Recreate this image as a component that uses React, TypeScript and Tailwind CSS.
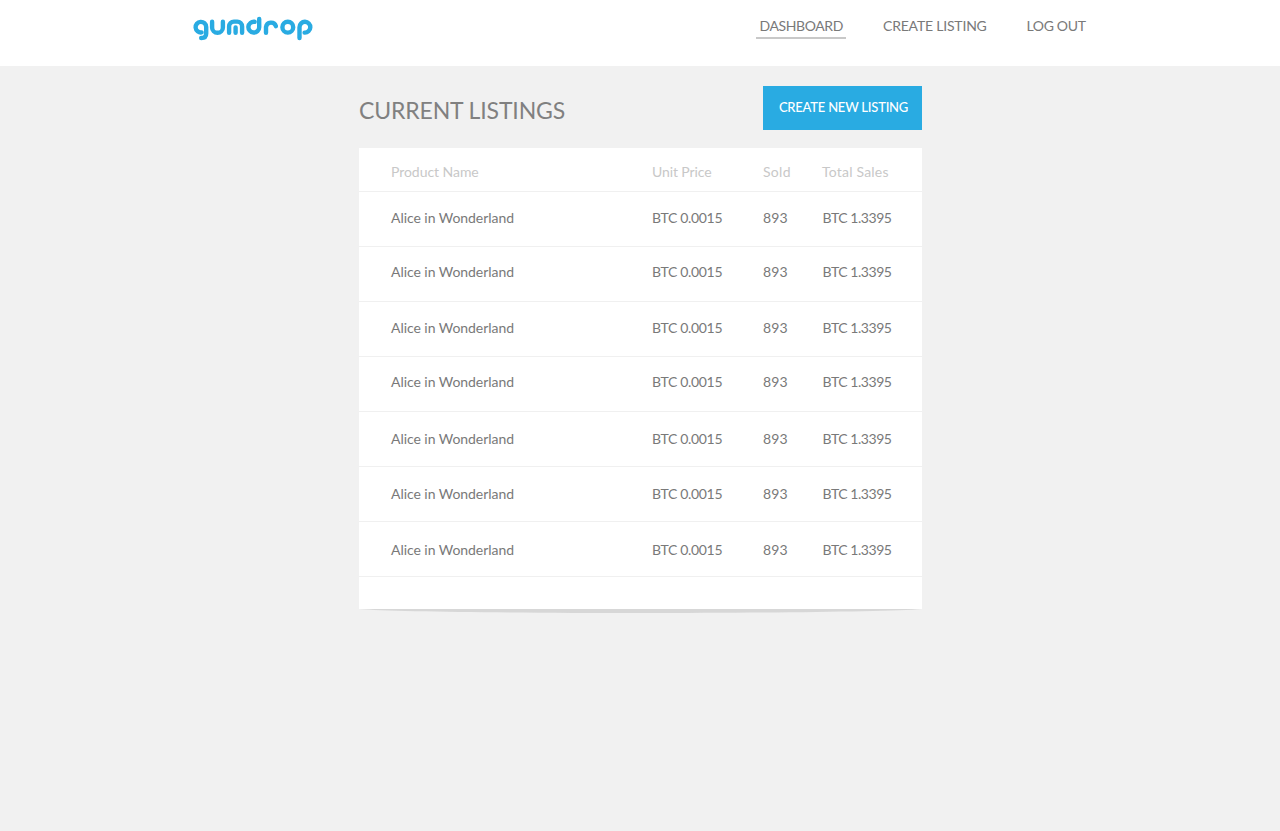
type Listing = {
  name: string;
  price: string;
  sold: string;
  total: string;
  offset: string;
};

const book = { name: "Alice in Wonderland", price: "BTC 0.0015", sold: "893", total: "BTC 1.3395" };

const listings: Listing[] = [
  { ...book, offset: "pt-[16px]" },
  { ...book, offset: "pt-[15px]" },
  { ...book, offset: "pt-[16px]" },
  { ...book, offset: "pt-[15px]" },
  { ...book, offset: "pt-[17px]" },
  { ...book, offset: "pt-[17px]" },
  { ...book, offset: "pt-[18px]" },
];

const columns = "grid grid-cols-[261px_111px_59px_1fr] pl-8 text-sm leading-5";

function Logo() {
  return (
    <svg
      role="img"
      aria-label="gumdrop"
      width="120"
      height="26"
      viewBox="193 16 120 26"
      fill="none"
      stroke="#29abe2"
      strokeWidth="4.4"
      strokeLinecap="round"
    >
      <path d="M201.6 32.4 A5.3 5.3 0 1 1 206.2 27 V33.5 Q206.2 38 201.2 38" />
      <path d="M212.1 21.8 V27.4 A5.4 5.4 0 0 0 222.9 27.4 V21.8" />
      <path d="M229.1 32.8 V26.4 A4.8 4.8 0 0 1 233.9 21.6 H237.3 A4.8 4.8 0 0 1 242.1 26.4 V32.8 M235.6 27.5 V32.8" />
      <path d="M254.6 21.8 A5.4 5.4 0 1 0 259.2 27.2 V19" />
      <path d="M266 32.8 V27 A5.1 5.1 0 0 1 275.9 26.2" />
      <circle cx="287.8" cy="27.2" r="5.4" />
      <path d="M299.5 38 V27.2 A5.4 5.4 0 1 1 304.6 32.6" />
    </svg>
  );
}

export default function App() {
  return (
    <div className="min-h-[831px] bg-[#f1f1f1] font-[Lato,sans-serif] text-[#797979]">
      <header className="flex h-[66px] items-start bg-white pl-[193px]">
        <div className="pt-4">
          <Logo />
        </div>
        <nav className="ml-[443px] flex pt-4 text-sm leading-5">
          <a className="h-[23px] w-[90px] border-b-2 border-[#c8c8c8] pl-[3.5px] tracking-[-0.4px] whitespace-nowrap">
            DASHBOARD
          </a>
          <a className="ml-9 w-[144px] pl-px tracking-[-0.2px]">CREATE LISTING</a>
          <a className="pl-[0.5px] tracking-[-0.35px]">LOG OUT</a>
        </nav>
      </header>

      <main className="ml-[359px] w-[563px] pt-5">
        <div className="flex h-11 items-start justify-between">
          <h1 className="pt-2 text-[23px] leading-8 tracking-[-0.14px] text-[#808080]">CURRENT LISTINGS</h1>
          <button className="h-11 w-[159px] bg-[#29abe2] pb-px pl-0.5 text-[13px] font-medium tracking-[-0.22px] text-white">
            CREATE NEW LISTING
          </button>
        </div>

        <section className="mt-[18px] bg-white pb-8">
          <div className={`${columns} h-11 border-b border-[#f0f0f0] pt-[14px] text-[#c8c8c8]`}>
            <span className="tracking-[-0.05px]">Product Name</span>
            <span className="tracking-[-0.1px]">Unit Price</span>
            <span className="tracking-[0.3px]">Sold</span>
            <span className="tracking-[0.2px]">Total Sales</span>
          </div>
          {listings.map((item, i) => (
            <div key={i} className={`${columns} ${item.offset} h-[55px] border-b border-[#f0f0f0]`}>
              <span className="tracking-[-0.05px]">{item.name}</span>
              <span className="tracking-[-0.33px]">{item.price}</span>
              <span className="tracking-[0.15px]">{item.sold}</span>
              <span className="pl-[0.5px] tracking-[-0.45px]">{item.total}</span>
            </div>
          ))}
        </section>
        <svg className="block" width="563" height="5" viewBox="0 0 563 5" fill="#d7d7d7">
          <path d="M0 0 H563 C500 5.3 63 5.3 0 0 Z" />
        </svg>
      </main>
    </div>
  );
}
